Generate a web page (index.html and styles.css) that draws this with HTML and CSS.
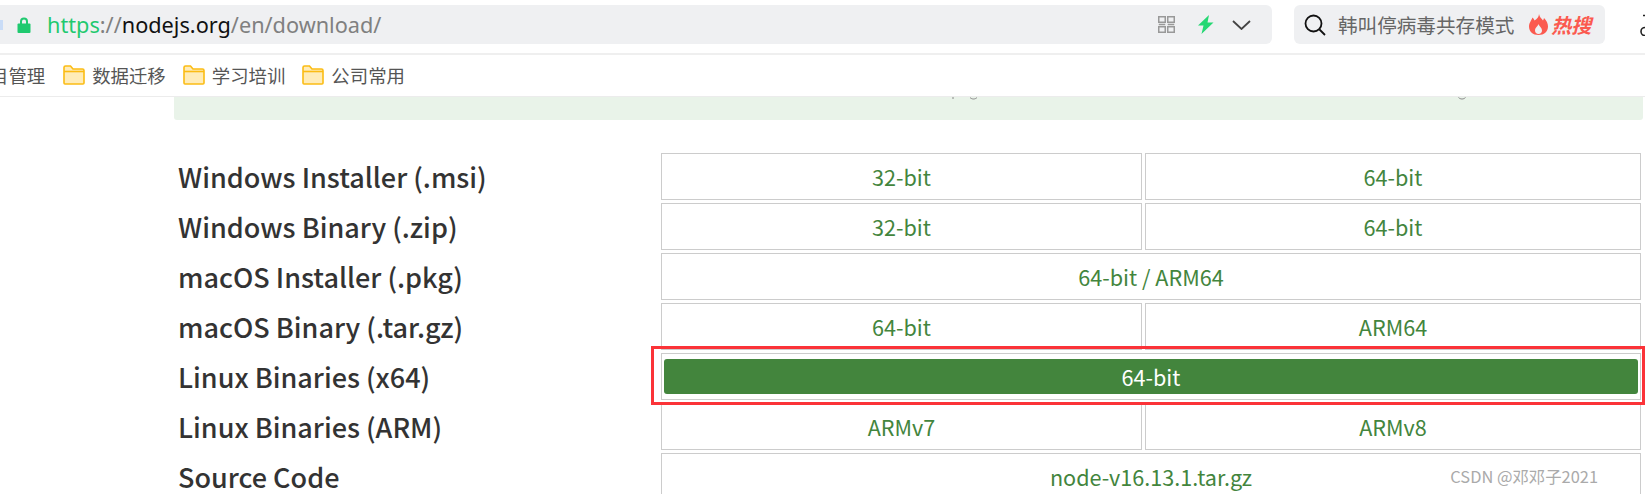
FILE: index.html
```html
<!DOCTYPE html>
<html lang="zh-CN">
<head>
    <meta charset="UTF-8">
    <title>Download | Node.js</title>
    <link rel="stylesheet" href="styles.css">
</head>
<body>
    <div class="toolbar">
        <div class="address">
            <div class="favicon"></div>
            <svg class="lock" viewBox="0 0 14 16"><path d="M3 7V4.500a4 4 0 0 1 8 0V7H9V4.500a2 2 0 0 0-4 0V7z"/><rect x="0.500" y="6.500" width="13" height="9.500" rx="1"/></svg>
            <div class="url"><span class="scheme">https</span><span class="path">://</span><span class="host">nodejs.org</span><span class="path">/en/download/</span></div>
            <svg class="qr" viewBox="0 0 17 17"><path d="M.75.75h6.500v5.500H.75zM9.750.75h6.500v5.500h-6.500zM.75 8.500h6.500M9.750 8.500h6.500M.75 10.750h6.500v5.500H.75zM9.750 10.750h6.500v5.500h-6.500z"/></svg>
            <svg class="bolt" viewBox="0 0 16 19"><path d="M11 0 0 10.500h5.500L3.500 19 15.500 7.500H9.500z"/></svg>
            <svg class="chevron" viewBox="0 0 19 10"><path d="M1 1l8.500 8L18 1"/></svg>
        </div>
        <div class="search">
            <svg class="magnifier" viewBox="0 0 22 22"><circle cx="9.500" cy="9.500" r="8"/><path d="m15.500 15.500 5.500 5.500"/></svg>
            <span class="hot-word">韩叫停病毒共存模式</span>
            <svg class="flame" viewBox="0 0 19 21"><path d="M10 0c.5 3 2.500 4.500 4 6.500.5-.8.8-1.500 1-2.500 2.500 2.500 4 5.500 4 8.500 0 5-4 8.500-9.500 8.500S0 17.500 0 12.500C0 8.500 2.500 6.500 3.500 3.500c1 .8 1.700 2 2 3C8 5 10 3 10 0zm-.5 10c-.5 2-3.500 3.500-3.500 6.500C6 18.500 7.500 20 9.500 20s3.500-1.500 3.500-3.500c0-3-3-4.500-3.500-6.500z"/></svg>
            <span class="hot-label">热搜</span>
        </div>
        <svg class="profile" viewBox="0 0 5 22"><path d="M3 1.500h2M5 13.500a4 4 0 0 0-4 4 4 4 0 0 0 4 4"/></svg>
    </div>

    <div class="bookmarks">
        <span class="bookmark bookmark-cut">目管理</span>
        <span class="bookmark"><svg class="folder" viewBox="0 0 22 20"><path d="M1 18V2.500C1 1.700 1.700 1 2.500 1h5l2.500 3h9.500c.8 0 1.500.7 1.500 1.500V18c0 .6-.5 1-1 1H2c-.5 0-1-.4-1-1z"/><path d="M1 6.500h20"/></svg>数据迁移</span>
        <span class="bookmark"><svg class="folder" viewBox="0 0 22 20"><path d="M1 18V2.500C1 1.700 1.700 1 2.500 1h5l2.500 3h9.500c.8 0 1.500.7 1.500 1.500V18c0 .6-.5 1-1 1H2c-.5 0-1-.4-1-1z"/><path d="M1 6.500h20"/></svg>学习培训</span>
        <span class="bookmark"><svg class="folder" viewBox="0 0 22 20"><path d="M1 18V2.500C1 1.700 1.700 1 2.500 1h5l2.500 3h9.500c.8 0 1.500.7 1.500 1.500V18c0 .6-.5 1-1 1H2c-.5 0-1-.4-1-1z"/><path d="M1 6.500h20"/></svg>公司常用</span>
    </div>

    <div class="content">
        <div class="banner">
            <svg class="descender first" viewBox="0 0 26 3"><path d="M1 0v2M18 .5c2 2 5 2 7 0"/></svg>
            <svg class="descender second" viewBox="0 0 8 3"><path d="M.5.5c2 2 5 2 7 0"/></svg>
        </div>

        <div class="downloads">
            <div class="label">Windows Installer (.msi)</div>
            <a class="cell">32-bit</a>
            <a class="cell">64-bit</a>

            <div class="label">Windows Binary (.zip)</div>
            <a class="cell">32-bit</a>
            <a class="cell">64-bit</a>

            <div class="label">macOS Installer (.pkg)</div>
            <a class="cell wide">64-bit / ARM64</a>

            <div class="label">macOS Binary (.tar.gz)</div>
            <a class="cell">64-bit</a>
            <a class="cell">ARM64</a>

            <div class="label">Linux Binaries (x64)</div>
            <div class="cell wide active"><a class="active-btn">64-bit</a></div>

            <div class="label">Linux Binaries (ARM)</div>
            <a class="cell">ARMv7</a>
            <a class="cell">ARMv8</a>

            <div class="label">Source Code</div>
            <a class="cell wide">node-v16.13.1.tar.gz</a>
        </div>
    </div>

    <div class="highlight"></div>
    <div class="watermark">CSDN @邓邓子2021</div>
</body>
</html>
```

FILE: styles.css
```css
html, body {
    margin: 0;
    height: 494px;
    overflow: hidden;
    background-color: white;
}
body {
    position: relative;
    font-family: "Noto Sans CJK SC", "Noto Sans", sans-serif;
}
svg {
    display: block;
    flex: none;
}

/* browser chrome */
.toolbar {
    display: flex;
    height: 55px;
    box-sizing: border-box;
    padding-top: 5px;
    padding-bottom: 9px;
    border-bottom: 2px solid #efefef;
}
.address {
    display: flex;
    align-items: center;
    width: 1272px;
    background-color: #eff0f2;
    border-radius: 0 6px 6px 0;
}
.favicon {
    width: 3px;
    height: 10px;
    background-color: #c9dcf7;
}
.lock {
    width: 14px;
    height: 16px;
    margin-left: 14px;
    fill: #1fc96f;
}
.url {
    flex: 1;
    margin-left: 16px;
    font-family: "Noto Sans", sans-serif;
    font-size: 21.7px;
    color: #808080;
}
.scheme {
    color: #1fc96f;
}
.host {
    color: #111;
}
.qr {
    width: 17px;
    height: 17px;
    fill: none;
    stroke: #999;
    stroke-width: 1.5;
}
.bolt {
    width: 16px;
    height: 19px;
    margin-left: 23px;
    fill: #26d873;
}
.chevron {
    width: 19px;
    height: 10px;
    margin-left: 18px;
    margin-right: 21px;
    fill: none;
    stroke: #444;
    stroke-width: 1.8;
}
.search {
    display: flex;
    align-items: center;
    width: 311px;
    margin-left: 22px;
    background-color: #eff0f2;
    border-radius: 6px;
}
.magnifier {
    width: 22px;
    height: 22px;
    margin-left: 10px;
    fill: none;
    stroke: #111;
    stroke-width: 1.8;
}
.hot-word {
    margin-left: 12px;
    font-size: 19.6px;
    color: #666;
}
.flame {
    width: 19px;
    height: 21px;
    margin-left: 15px;
    fill: #fb5a4f;
    fill-rule: evenodd;
}
.hot-label {
    margin-left: 3px;
    font-size: 20px;
    font-weight: 700;
    font-style: italic;
    color: #fb5a4f;
}
.profile {
    width: 5px;
    height: 22px;
    margin-top: 9px;
    margin-left: 35px;
    fill: none;
    stroke: #222;
    stroke-width: 1.6;
}

.bookmarks {
    display: flex;
    align-items: center;
    height: 40px;
    padding-bottom: 1px;
    gap: 17px;
    border-bottom: 1px solid #ececec;
    font-size: 18.4px;
    color: #555;
}
.bookmark {
    display: flex;
    align-items: center;
    gap: 7px;
}
.bookmark-cut {
    margin-left: -10px;
    margin-right: 1px;
}
.folder {
    width: 22px;
    height: 20px;
    fill: #ffecb8;
    stroke: #fbbc14;
    stroke-width: 1.6;
}

/* page */
.content {
    padding-left: 174px;
    padding-right: 2px;
}
.banner {
    display: flex;
    height: 23px;
    background-color: #e9f3e9;
    border-radius: 0 0 3px 3px;
}
.descender {
    height: 3px;
    fill: none;
    stroke: #888;
    stroke-width: 1;
}
.descender.first {
    width: 26px;
    margin-left: 778px;
}
.descender.second {
    width: 8px;
    margin-left: 480px;
}
.downloads {
    display: grid;
    grid-template-columns: 484px 481px 496px;
    grid-auto-rows: 47px;
    gap: 3px;
    margin-top: 33px;
}
.label {
    display: flex;
    align-items: center;
    padding-left: 4px;
    font-size: 27px;
    font-weight: 500;
    color: #333;
}
.cell {
    display: flex;
    align-items: center;
    justify-content: center;
    border: 1px solid #ccc;
    font-size: 21.6px;
    color: #43853d;
}
.wide {
    grid-column: span 2;
}
.active {
    padding: 5px 2px;
}
.active-btn {
    display: flex;
    align-items: center;
    justify-content: center;
    width: 100%;
    height: 100%;
    background-color: #43853d;
    border-radius: 3px;
    color: white;
}

/* annotations sitting on top of the screenshot */
.highlight {
    position: absolute;
    left: 651px;
    top: 346px;
    width: 988px;
    height: 53px;
    border: 3px solid #fb3338;
}
.watermark {
    position: absolute;
    right: 47px;
    top: 464px;
    font-size: 16.4px;
    color: #aaa;
}
```
